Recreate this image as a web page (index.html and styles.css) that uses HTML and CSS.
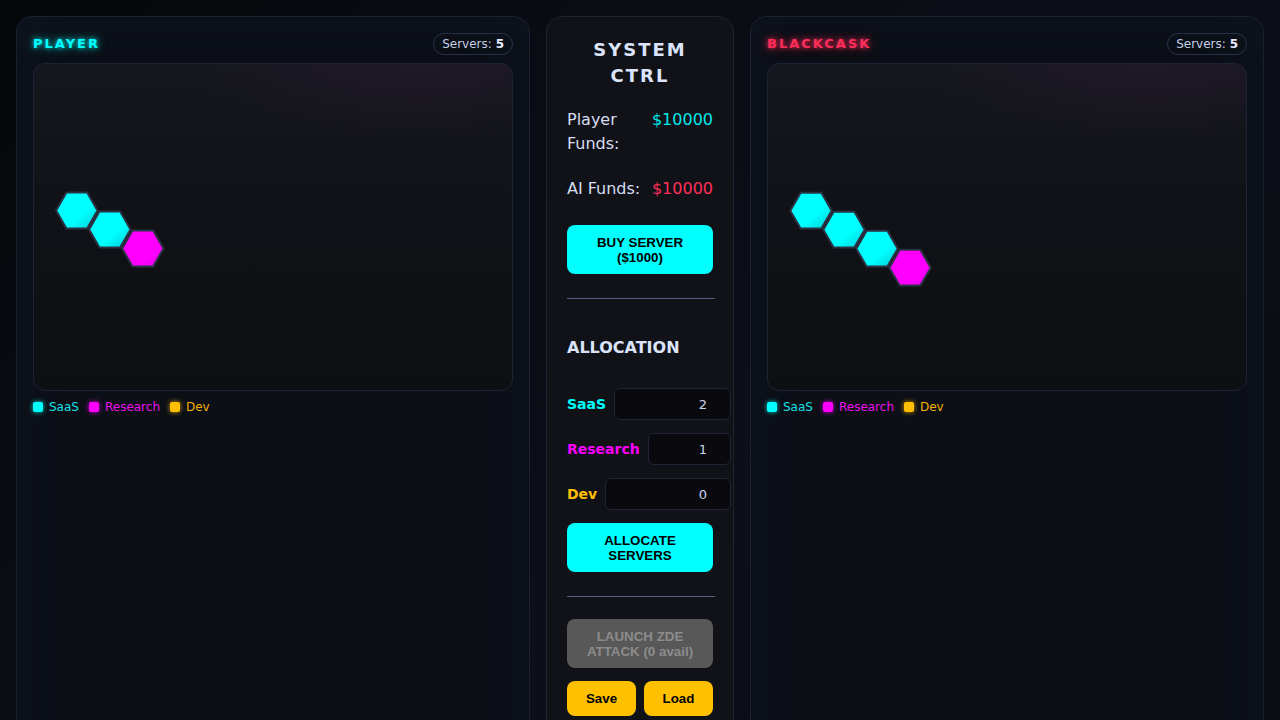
FILE: index.html
```html
<!DOCTYPE html>
<html lang="en">
<head>
<meta charset="utf-8">
<title>Server Wars</title>
<link rel="stylesheet" href="styles.css">
</head>
<body>
<main class="layout">
  <section class="panel">
    <header class="panel-head">
      <h2 class="panel-title title-player">PLAYER</h2>
      <span class="pill">Servers: <b>5</b></span>
    </header>
    <div class="board">
      <svg class="hexes" width="478" height="326" viewBox="0 0 478 326">
        <defs>
          <linearGradient id="gc" x1="0" y1="0" x2="1" y2="1">
            <stop offset="0" stop-color="#00ffff"/>
            <stop offset="0.62" stop-color="#00ffff"/>
            <stop offset="1" stop-color="#00c9d2"/>
          </linearGradient>
          <linearGradient id="gm" x1="0" y1="0" x2="1" y2="1">
            <stop offset="0" stop-color="#ff00ff"/>
            <stop offset="0.7" stop-color="#ff00ff"/>
            <stop offset="1" stop-color="#e000e6"/>
          </linearGradient>
        </defs>
        <polygon class="hex" fill="url(#gc)" points="63.5,146.5 53.15,164.4 32.45,164.4 22.1,146.5 32.45,128.6 53.15,128.6"/>
        <polygon class="hex" fill="url(#gc)" points="96.5,165.5 86.15,183.4 65.45,183.4 55.1,165.5 65.45,147.6 86.15,147.6"/>
        <polygon class="hex" fill="url(#gm)" points="129.5,184.5 119.15,202.4 98.45,202.4 88.1,184.5 98.45,166.6 119.15,166.6"/>
      </svg>
    </div>
    <ul class="legend">
      <li class="leg leg-saas"><i></i>SaaS</li>
      <li class="leg leg-research"><i></i>Research</li>
      <li class="leg leg-dev"><i></i>Dev</li>
    </ul>
  </section>

  <section class="panel control">
    <h1 class="ctrl-title">SYSTEM CTRL</h1>
    <div class="funds">
      <div class="fund-row"><span>Player Funds:</span><span class="val-player">$10000</span></div>
      <div class="fund-row row-ai"><span>AI Funds:</span><span class="val-ai">$10000</span></div>
    </div>
    <button class="btn btn-cyan btn-buy">BUY SERVER ($1000)</button>
    <hr class="rule">
    <h3 class="alloc-title">ALLOCATION</h3>
    <div class="alloc-row"><label class="lbl lbl-saas">SaaS</label><span class="field"><input type="number" value="2"></span></div>
    <div class="alloc-row"><label class="lbl lbl-research">Research</label><span class="field"><input type="number" value="1"></span></div>
    <div class="alloc-row"><label class="lbl lbl-dev">Dev</label><span class="field"><input type="number" value="0"></span></div>
    <button class="btn btn-cyan btn-alloc">ALLOCATE SERVERS</button>
    <hr class="rule rule-2">
    <button class="btn btn-disabled">LAUNCH ZDE ATTACK (0 avail)</button>
    <div class="io-row">
      <button class="btn btn-gold">Save</button>
      <button class="btn btn-gold">Load</button>
    </div>
  </section>

  <section class="panel">
    <header class="panel-head">
      <h2 class="panel-title title-ai">BLACKCASK</h2>
      <span class="pill">Servers: <b>5</b></span>
    </header>
    <div class="board">
      <svg class="hexes" width="478" height="326" viewBox="0 0 478 326">
        <defs>
          <linearGradient id="gc2" x1="0" y1="0" x2="1" y2="1">
            <stop offset="0" stop-color="#00ffff"/>
            <stop offset="0.62" stop-color="#00ffff"/>
            <stop offset="1" stop-color="#00c9d2"/>
          </linearGradient>
          <linearGradient id="gm2" x1="0" y1="0" x2="1" y2="1">
            <stop offset="0" stop-color="#ff00ff"/>
            <stop offset="0.7" stop-color="#ff00ff"/>
            <stop offset="1" stop-color="#e000e6"/>
          </linearGradient>
        </defs>
        <polygon class="hex" fill="url(#gc2)" points="63.7,146.7 53.35,164.6 32.65,164.6 22.3,146.7 32.65,128.8 53.35,128.8"/>
        <polygon class="hex" fill="url(#gc2)" points="96.7,165.7 86.35,183.6 65.65,183.6 55.3,165.7 65.65,147.8 86.35,147.8"/>
        <polygon class="hex" fill="url(#gc2)" points="129.7,184.7 119.35,202.6 98.65,202.6 88.3,184.7 98.65,166.8 119.35,166.8"/>
        <polygon class="hex" fill="url(#gm2)" points="162.7,203.7 152.35,221.6 131.65,221.6 121.3,203.7 131.65,185.8 152.35,185.8"/>
      </svg>
    </div>
    <ul class="legend">
      <li class="leg leg-saas"><i></i>SaaS</li>
      <li class="leg leg-research"><i></i>Research</li>
      <li class="leg leg-dev"><i></i>Dev</li>
    </ul>
  </section>
</main>
</body>
</html>
```

FILE: styles.css
```css
html, body {
  margin: 0;
  padding: 0;
  height: 100%;
  overflow: hidden;
}

body {
  font-family: "DejaVu Sans", sans-serif;
  color: #d6def2;
  background: linear-gradient(135deg, #06070a 0%, #0a0c13 30%, #0c0f18 60%, #0a0c12 100%);
}

.layout {
  display: grid;
  grid-template-columns: 1fr 188px 1fr;
  gap: 16px;
  padding: 16px;
  align-items: start;
}

.panel {
  border: 1px solid #1a2130;
  border-radius: 16px;
  background: #0c0f16;
  box-shadow: inset 0 0 60px rgba(30, 60, 100, 0.12);
  padding: 16px;
  align-self: stretch;
  min-height: 760px;
}

.panel-head {
  display: flex;
  justify-content: space-between;
  align-items: center;
  height: 22px;
}

.panel-title {
  margin: 0;
  font-size: 13px;
  font-weight: bold;
  letter-spacing: 2px;
  line-height: 16px;
}

.title-player {
  color: #00ffff;
  text-shadow: 0 0 5px rgba(0, 255, 255, 0.85), 0 0 12px rgba(0, 255, 255, 0.55);
}

.title-ai {
  color: #ff2d5a;
  text-shadow: 0 0 5px rgba(255, 45, 90, 0.9), 0 0 12px rgba(255, 45, 90, 0.55);
}

.pill {
  font-size: 12px;
  line-height: 16px;
  color: #c3cee6;
  border: 1px solid #26304a;
  border-radius: 999px;
  padding: 2px 8px;
}

.pill b {
  color: #e4ebff;
}

.board {
  margin-top: 8px;
  height: 326px;
  border: 1px solid #1d2334;
  border-radius: 12px;
  background:
    radial-gradient(ellipse 60% 30% at 80% 0%, rgba(70, 30, 70, 0.22), transparent 80%),
    linear-gradient(180deg, #15171e 0%, #111217 45%, #0e0f13 100%);
  overflow: hidden;
}

.hexes {
  display: block;
}

.hex {
  stroke: #2b3244;
  stroke-width: 2;
  stroke-linejoin: round;
}

.legend {
  list-style: none;
  margin: 8px 0 0;
  padding: 0;
  display: flex;
  gap: 10px;
  font-size: 12px;
  line-height: 16px;
}

.leg {
  display: flex;
  align-items: center;
  gap: 6px;
}

.leg i {
  width: 10px;
  height: 10px;
  border-radius: 2px;
  display: block;
}

.leg-saas { color: #14e0ec; }
.leg-saas i { background: #00ffff; box-shadow: 0 0 5px rgba(0, 255, 255, 0.8); }
.leg-research { color: #ec10ec; }
.leg-research i { background: #ff00ff; box-shadow: 0 0 5px rgba(255, 0, 255, 0.8); }
.leg-dev { color: #f5b000; }
.leg-dev i { background: #ffbf00; box-shadow: 0 0 5px rgba(255, 191, 0, 0.8); }

/* control column */
.control {
  padding: 20px 20px 20px;
  background: #111218;
  border-color: #1f2331;
  box-shadow: none;
}

.ctrl-title {
  margin: 0;
  text-align: center;
  font-size: 18px;
  font-weight: bold;
  letter-spacing: 2px;
  line-height: 26px;
  color: #dbe4fb;
}

.funds {
  margin-top: 19px;
  font-size: 16px;
  line-height: 24px;
}

.fund-row {
  display: flex;
  justify-content: space-between;
  gap: 8px;
}

.row-ai {
  margin-top: 21px;
}

.val-player { color: #00e8ea; }
.val-ai { color: #ff2d5a; }

.btn {
  display: block;
  width: 100%;
  height: 49px;
  box-sizing: border-box;
  border: none;
  border-radius: 8px;
  font-family: "Liberation Sans", Arial, sans-serif;
  font-size: 13.33px;
  font-weight: bold;
  line-height: 15px;
  padding: 0 12px;
  color: #000;
  text-align: center;
}

.btn-cyan {
  background: #00ffff;
}

.btn-buy {
  margin-top: 24px;
}

.rule {
  margin: 24px 0 0;
  border: none;
  border-top: 1px solid #535f85;
  width: 148px;
}

.alloc-title {
  margin: 39px 0 0;
  font-size: 16px;
  line-height: 19px;
  font-weight: bold;
  color: #dbe4fb;
}

.alloc-row {
  display: flex;
  align-items: center;
  gap: 8px;
  margin-top: 13px;
}

.alloc-title + .alloc-row {
  margin-top: 31px;
}

.lbl {
  font-size: 14px;
  font-weight: bold;
  white-space: nowrap;
}

.lbl-saas { color: #00ffff; }
.lbl-research { color: #ff00ff; }
.lbl-dev { color: #ffbf00; }

.field {
  flex: 1;
  min-width: 0;
  display: block;
}

.field input {
  display: block;
  width: 100%;
  box-sizing: content-box;
  height: 16px;
  padding: 7px 8px;
  border: 1px solid #1f2535;
  border-radius: 6px;
  background: #0a0a0e;
  color: #c9d6f4;
  font-family: "DejaVu Sans", sans-serif;
  font-size: 13px;
  text-align: right;
}

.btn-alloc {
  margin-top: 13px;
}

.rule-2 {
  margin-top: 24px;
}

.btn-disabled {
  margin-top: 22px;
  background: #585858;
  color: #8c8c8c;
}

.io-row {
  display: flex;
  gap: 8px;
  margin-top: 13px;
}

.btn-gold {
  background: #ffc000;
  height: 35px;
  padding: 0 8px;
}
```
